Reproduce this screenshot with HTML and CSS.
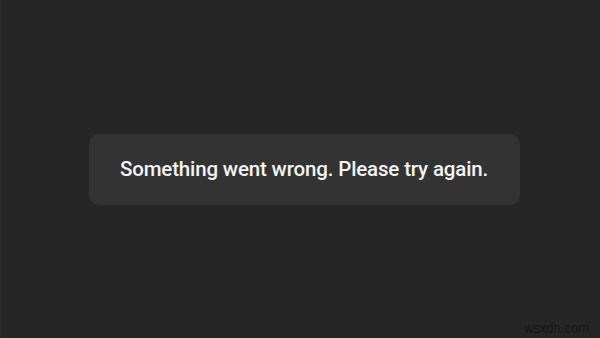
FILE: index.html
```html
<!DOCTYPE html>
<html>
<head>
<meta charset="utf-8">
<link rel="stylesheet" href="styles.css">
</head>
<body>
<div class="screen">
  <div class="toast">Something went wrong. Please try again.</div>
  <div class="watermark">wsxdn.com</div>
</div>
</body>
</html>
```

FILE: styles.css
```css
html, body {
  margin: 0;
  padding: 0;
  background: #262626;
}
.screen {
  position: relative;
  width: 600px;
  height: 338px;
  display: flex;
  align-items: center;
  justify-content: center;
  padding-left: 7px;
  box-sizing: border-box;
  border-left: 1px solid #2c2c2c;
}
.toast {
  width: 431px;
  height: 71px;
  box-sizing: border-box;
  padding-bottom: 1px;
  background: #333333;
  border-radius: 10px;
  display: flex;
  align-items: center;
  justify-content: center;
  color: #f4f4f4;
  font-family: Roboto, "Noto Sans", sans-serif;
  font-weight: 500;
  font-size: 20.5px;
  letter-spacing: -0.15px;
}
.watermark {
  position: absolute;
  right: 11px;
  bottom: 3px;
  color: #161616;
  font-family: "Liberation Sans", Arial, sans-serif;
  font-size: 13px;
  line-height: 15px;
  transform: scaleY(1.15);
}
```
